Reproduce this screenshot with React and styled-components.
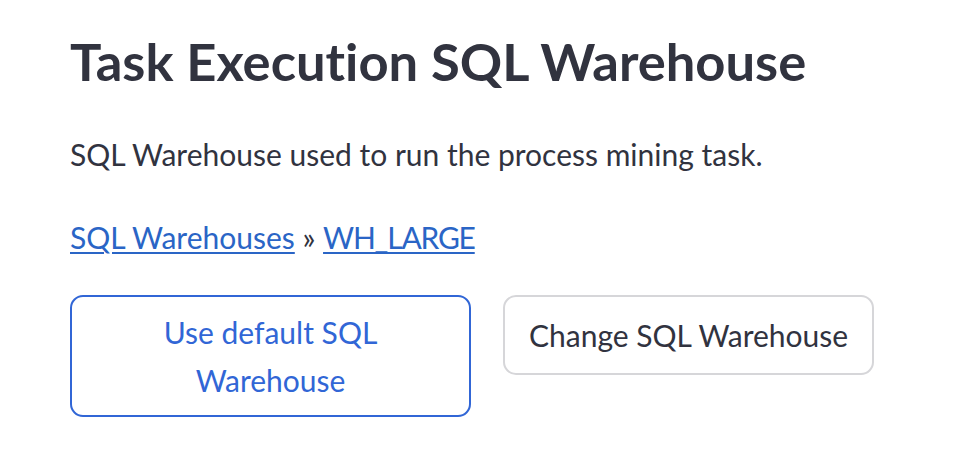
import React from 'react'
import styled, { createGlobalStyle } from 'styled-components'

const GlobalStyle = createGlobalStyle`
  html, body {
    margin: 0;
    padding: 0;
    background: #ffffff;
  }
  body {
    font-family: Lato, "Noto Sans", sans-serif;
    font-variant-ligatures: none;
    color: #31333f;
  }
`

const Page = styled.div`
  padding: 30px 70px;
  display: flex;
  flex-direction: column;
`

const Title = styled.h2`
  margin: 0;
  font-size: 52.5px;
  font-weight: 700;
  line-height: 62px;
  color: #31333f;
`

const Description = styled.p`
  margin: 38px 0 0 0;
  font-size: 30px;
  line-height: 48px;
`

const Breadcrumb = styled.p`
  margin: 35px 0 0 0;
  font-size: 30px;
  line-height: 48px;
`

const Link = styled.a`
  color: #2a65c6;
  text-decoration: underline;
  text-decoration-thickness: 2px;
  text-underline-offset: 3px;
  letter-spacing: ${p => p.$spacing || 0}px;
`

const Actions = styled.div`
  display: flex;
  align-items: flex-start;
  gap: 32px;
  margin-top: 34px;
`

const Button = styled.button`
  font-family: inherit;
  font-variant-ligatures: none;
  font-size: 30px;
  line-height: 48px;
  min-height: 80px;
  background: #ffffff;
  border-radius: 13px;
  padding: 11px 24px;
  cursor: pointer;
  white-space: ${p => (p.$width ? 'normal' : 'nowrap')};
  width: ${p => (p.$width ? `${p.$width}px` : 'auto')};
  border: 2px solid ${p => (p.$primary ? '#3166d6' : '#d6d6d9')};
  color: ${p => (p.$primary ? '#3166d6' : '#31333f')};
`

export default function App() {
  return (
    <>
      <GlobalStyle />
      <Page>
        <Title>Task Execution SQL Warehouse</Title>
        <Description>SQL Warehouse used to run the process mining task.</Description>
        <Breadcrumb>
          <Link href="#">SQL Warehouses</Link> » <Link href="#" $spacing={-1.2}>WH_LARGE</Link>
        </Breadcrumb>
        <Actions>
          <Button $primary $width={401}>Use default SQL Warehouse</Button>
          <Button>Change SQL Warehouse</Button>
        </Actions>
      </Page>
    </>
  )
}
